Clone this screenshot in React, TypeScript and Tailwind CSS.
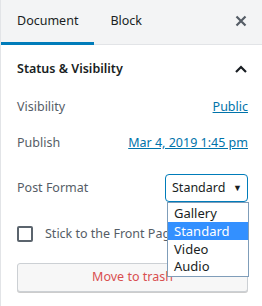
import React from "react";

const App: React.FC = () => {
  return (
    <div
      className="relative w-[262px] h-[306px] overflow-hidden bg-white border-l border-[#e2e4e7] text-[12.5px] text-[#555d66]"
      style={{ fontFamily: '"Noto Sans", "Open Sans", sans-serif' }}
    >
      {/* tabs */}
      <div className="flex h-[45px] items-stretch bg-[#f3f4f5] border-b border-[#e2e4e7]">
        <div className="flex items-center px-4 pt-[1px] border-b-[3px] border-[#007cba] text-[#191e23] -mb-px">
          Document
        </div>
        <div className="flex items-center px-4 pb-[2px] text-[#191e23]">Block</div>
        <div className="ml-auto flex items-center pr-[15px] pb-[2px]">
          <svg width="12" height="12" viewBox="0 0 12 12">
            <path d="M1.5 1.5 L10.5 10.5 M10.5 1.5 L1.5 10.5" stroke="#555d66" strokeWidth="2.2" />
          </svg>
        </div>
      </div>

      {/* panel */}
      <div className="pl-4 pr-[14px]">
        <div className="flex h-[48px] items-center justify-between">
          <span className="text-[#191e23] font-semibold">Status &amp; Visibility</span>
          <svg width="12" height="8" viewBox="0 0 12 8" className="mr-[1px]">
            <path d="M1 7 L6 2 L11 7" stroke="#191e23" strokeWidth="2.2" fill="none" />
          </svg>
        </div>

        <div className="flex h-[28px] items-center justify-between">
          <span>Visibility</span>
          <span className="text-[#0073aa] underline">Public</span>
        </div>

        <div className="mt-[8px] flex h-[28px] items-center justify-between">
          <span>Publish</span>
          <span className="text-[#0073aa] underline">Mar 4, 2019 1:45 pm</span>
        </div>

        <div className="mt-[17px] flex h-[28px] items-center justify-between">
          <span>Post Format</span>
          <div className="flex h-[28px] w-[83px] items-center justify-between rounded-[4px] border-[1.5px] border-[#007cba] pl-[6px] pr-[5px] text-[#191e23]">
            <span>Standard</span>
            <span className="text-[9px]">▼</span>
          </div>
        </div>

        <div className="mt-[18px] flex h-[28px] items-center gap-[12px]">
          <div className="h-[16px] w-[16px] rounded-[2px] border-2 border-[#5b646d]" />
          <span className="whitespace-nowrap">Stick to the Front Page</span>
        </div>

        <div className="mt-[15px] flex h-[29px] items-center justify-center rounded-[3px] border border-[#ccd0d4] bg-[#f7f7f7] text-[#d94f4f] shadow-[0_1px_0_#ccc]">
          Move to trash
        </div>
      </div>

      {/* open select list */}
      <div className="absolute left-[166px] top-[202px] w-[82px] border border-[#7f9db9] bg-white py-px text-[13px] text-[#191e23]">
        <div className="h-[18px] pl-[6px] leading-[18px]">Gallery</div>
        <div className="h-[18px] bg-[#3390ff] pl-[6px] leading-[18px] text-white">Standard</div>
        <div className="h-[18px] pl-[6px] leading-[18px]">Video</div>
        <div className="h-[17px] pl-[6px] leading-[17px]">Audio</div>
      </div>
    </div>
  );
};

export default App;
